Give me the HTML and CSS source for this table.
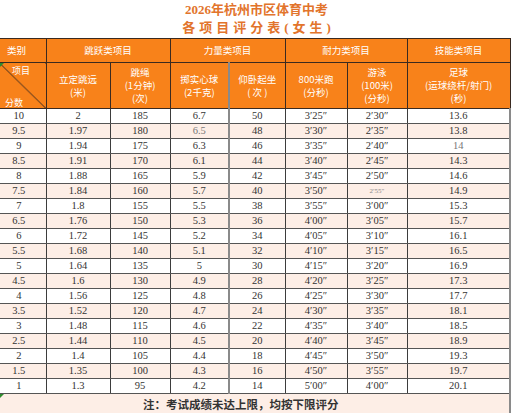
FILE: index.html
```html
<!DOCTYPE html>
<html lang="zh">
<head>
<meta charset="utf-8">
<title>2026年杭州市区体育中考 各项目评分表（女生）</title>
<link rel="stylesheet" href="styles.css">
</head>
<body>
<div class="page">
  <header class="titles">
    <div class="t1">2026年杭州市区体育中考</div>
    <div class="t2">各项目评分表(女生)</div>
  </header>
  <table class="score">
    <colgroup>
      <col class="c1"><col class="c2"><col class="c3"><col class="c4"><col class="c5"><col class="c6"><col class="c7"><col class="c8">
    </colgroup>
    <thead>
      <tr class="h1">
        <th class="first">类别</th>
        <th colspan="2">跳跃类项目</th>
        <th colspan="2">力量类项目</th>
        <th colspan="2">耐力类项目</th>
        <th>技能类项目</th>
      </tr>
      <tr class="h2">
        <th class="first diag">
          <div class="diagbox"><span class="xm">项目</span><span class="fs">分数</span></div>
          <i class="mark"></i>
        </th>
        <th>立定跳远<br>(米)</th>
        <th>跳绳<br>(1分钟)<br>(次)</th>
        <th>掷实心球<br>(2千克)</th>
        <th class="soft">仰卧起坐<br>( 次 )</th>
        <th>800米跑<br>(分秒)</th>
        <th>游泳<br>(100米)<br>(分秒)</th>
        <th>足球<br>(运球绕杆/射门)<br>(秒)</th>
      </tr>
    </thead>
    <tbody>
      <tr><td class="first">10</td><td>2</td><td>185</td><td>6.7</td><td class="soft">50</td><td>3′25″</td><td>2′30″</td><td>13.6</td></tr>
      <tr class="alt"><td class="first">9.5</td><td>1.97</td><td>180</td><td class="dim">6.5</td><td class="soft">48</td><td>3′30″</td><td>2′35″</td><td>13.8</td></tr>
      <tr><td class="first">9</td><td>1.94</td><td>175</td><td>6.3</td><td class="soft">46</td><td>3′35″</td><td>2′40″</td><td class="dim">14</td></tr>
      <tr class="alt"><td class="first">8.5</td><td>1.91</td><td>170</td><td>6.1</td><td class="soft">44</td><td>3′40″</td><td>2′45″</td><td>14.3</td></tr>
      <tr><td class="first">8</td><td>1.88</td><td>165</td><td>5.9</td><td class="soft">42</td><td>3′45″</td><td>2′50″</td><td>14.6</td></tr>
      <tr class="alt"><td class="first">7.5</td><td>1.84</td><td>160</td><td>5.7</td><td class="soft">40</td><td>3′50″</td><td class="tiny">2′55″</td><td>14.9</td></tr>
      <tr><td class="first">7</td><td>1.8</td><td>155</td><td>5.5</td><td class="soft">38</td><td>3′55″</td><td>3′00″</td><td>15.3</td></tr>
      <tr class="alt"><td class="first">6.5</td><td>1.76</td><td>150</td><td>5.3</td><td class="soft">36</td><td>4′00″</td><td>3′05″</td><td>15.7</td></tr>
      <tr><td class="first">6</td><td>1.72</td><td>145</td><td>5.2</td><td class="soft">34</td><td>4′05″</td><td>3′10″</td><td>16.1</td></tr>
      <tr class="alt"><td class="first">5.5</td><td>1.68</td><td>140</td><td>5.1</td><td class="soft">32</td><td>4′10″</td><td>3′15″</td><td>16.5</td></tr>
      <tr><td class="first">5</td><td>1.64</td><td>135</td><td>5</td><td class="soft">30</td><td>4′15″</td><td>3′20″</td><td>16.9</td></tr>
      <tr class="alt"><td class="first">4.5</td><td>1.6</td><td>130</td><td>4.9</td><td class="soft">28</td><td>4′20″</td><td>3′25″</td><td>17.3</td></tr>
      <tr><td class="first">4</td><td>1.56</td><td>125</td><td>4.8</td><td class="soft">26</td><td>4′25″</td><td>3′30″</td><td>17.7</td></tr>
      <tr class="alt"><td class="first">3.5</td><td>1.52</td><td>120</td><td>4.7</td><td class="soft">24</td><td>4′30″</td><td>3′35″</td><td>18.1</td></tr>
      <tr><td class="first">3</td><td>1.48</td><td>115</td><td>4.6</td><td class="soft">22</td><td>4′35″</td><td>3′40″</td><td>18.5</td></tr>
      <tr class="alt"><td class="first">2.5</td><td>1.44</td><td>110</td><td>4.5</td><td class="soft">20</td><td>4′40″</td><td>3′45″</td><td>18.9</td></tr>
      <tr><td class="first">2</td><td>1.4</td><td>105</td><td>4.4</td><td class="soft">18</td><td>4′45″</td><td>3′50″</td><td>19.3</td></tr>
      <tr class="alt"><td class="first">1.5</td><td>1.35</td><td>100</td><td>4.3</td><td class="soft">16</td><td>4′50″</td><td>3′55″</td><td>19.7</td></tr>
      <tr><td class="first">1</td><td>1.3</td><td>95</td><td>4.2</td><td class="soft">14</td><td>5′00″</td><td>4′00″</td><td>20.1</td></tr>
      <tr class="note"><td colspan="8"><i class="mark"></i>注：考试成绩未达上限，均按下限评分</td></tr>
    </tbody>
  </table>
</div>
</body>
</html>
```

FILE: styles.css
```css
html, body {
  margin: 0;
  padding: 0;
  background: #ffffff;
}

.page {
  width: 513px;
  height: 413px;
  overflow: hidden;
}

.titles {
  height: 38px;
  display: flex;
  flex-direction: column;
  align-items: center;
  color: #e2742c;
  font-family: "Liberation Serif", "Noto Sans CJK SC", serif;
  font-weight: bold;
}

.t1 {
  font-size: 13px;
  line-height: 14px;
  padding-top: 3px;
}

.t2 {
  font-size: 13px;
  line-height: 16px;
  padding-top: 3px;
  letter-spacing: 4px;
  margin-left: 4px;
}

.score {
  border-collapse: collapse;
  table-layout: fixed;
  width: 510px;
  font-family: "Liberation Serif", "Noto Sans CJK SC", serif;
  color: #333333;
}

.c1 { width: 46px; }
.c2 { width: 64px; }
.c3 { width: 60px; }
.c4 { width: 59px; }
.c5 { width: 56px; }
.c6 { width: 62px; }
.c7 { width: 60px; }
.c8 { width: 103px; }

.score th {
  background: #f8821a;
  color: #ffffff;
  font-weight: normal;
  font-family: "Noto Sans CJK SC", "Liberation Serif", sans-serif;
  font-size: 9.5px;
  line-height: 13px;
  border: 1px solid #3a2a20;
  padding: 0;
  text-align: center;
  vertical-align: middle;
}

.score thead .first {
  border-left: none;
}

.h1 th {
  height: 23px;
}

.h1 th.first {
  text-align: left;
  padding-left: 7px;
}

.h2 th {
  height: 45px;
}

.diag {
  position: relative;
  background: linear-gradient(to top right, #f8821a calc(50% - 0.7px), #3a2a20 50%, #f8821a calc(50% + 0.7px)) !important;
}

.diagbox {
  height: 45px;
  display: flex;
  flex-direction: column;
  justify-content: space-between;
  font-size: 9px;
  line-height: 11px;
}

.xm {
  align-self: flex-start;
  margin-left: 12px;
  margin-top: 2px;
}

.fs {
  align-self: flex-start;
  margin-left: 5px;
}

.mark {
  position: absolute;
  left: 0;
  top: 0;
  width: 0;
  height: 0;
  border-top: 4px solid #2e8b2e;
  border-right: 4px solid transparent;
}

.score td {
  height: 14px;
  padding: 0;
  font-size: 10.5px;
  line-height: 14px;
  text-align: center;
  border: 1px solid #3d3d3d;
  border-bottom-color: #555555;
  background: #ffffff;
}

.score td.first {
  border-left: none;
  padding-right: 8px;
}

.score tr.alt td {
  background: #fdeee6;
}

.score td.soft,
.score th.soft {
  border-left: 2px solid #8a8a8a;
}

.score td:last-child {
  border-right: 2px solid #8a8a8a;
}

.dim {
  color: #777777;
}

.tiny {
  font-size: 7px !important;
  color: #888888;
}

.score tr.note td {
  position: relative;
  height: 20px;
  background: #fdeee6;
  border-left: none;
  font-family: "Noto Sans CJK SC", sans-serif;
  font-weight: bold;
  font-size: 11.5px;
  text-align: left;
  padding-left: 143px;
  color: #333333;
}
```
